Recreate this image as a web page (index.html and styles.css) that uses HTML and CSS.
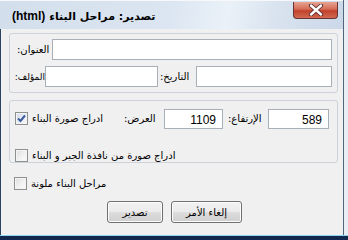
FILE: index.html
```html
<!DOCTYPE html>
<html>
<head>
  <meta charset="utf-8">
  <title>تصدير: مراحل البناء (html)</title>
  <link rel="stylesheet" href="styles.css">
</head>
<body>
<div class="window">
  <div class="window__title">
    <span class="window__caption">
      <span class="window__tag">(html)</span>
      <span class="window__name" dir="rtl">تصدير: مراحل البناء</span>
    </span>
    <span class="window__close">
      <svg width="18" height="12" viewBox="0 0 18 12">
        <path d="M4 1.5 L14 10.5 M14 1.5 L4 10.5" stroke="#5a2a2a" stroke-width="4.2" stroke-linecap="round"/>
        <path d="M4 1.5 L14 10.5 M14 1.5 L4 10.5" stroke="#ffffff" stroke-width="2.4" stroke-linecap="round"/>
      </svg>
    </span>
  </div>

  <div class="window__body">
    <div class="group group_info">
      <div class="row">
        <span class="lbl lbl_title" dir="rtl">العنوان:</span>
        <span class="field field_title"></span>
      </div>
      <div class="row row_second">
        <span class="lbl lbl_author" dir="rtl">المؤلف:</span>
        <span class="field field_author"></span>
        <span class="lbl lbl_date" dir="rtl">التاريخ:</span>
        <span class="field field_date"></span>
      </div>
    </div>

    <div class="group group_image">
      <div class="row">
        <span class="check check_on">
          <svg width="11" height="11" viewBox="0 0 11 11">
            <path d="M2 5.5 L4.5 8 L9 2.5" fill="none" stroke="#3c5c9c" stroke-width="2"/>
          </svg>
        </span>
        <span class="cap cap_image" dir="rtl">ادراج صورة البناء</span>
        <span class="lbl lbl_width" dir="rtl">العرض:</span>
        <span class="field field_num field_width">1109</span>
        <span class="lbl lbl_height" dir="rtl">الإرتفاع:</span>
        <span class="field field_num field_height">589</span>
      </div>
      <div class="row row_check">
        <span class="check"></span>
        <span class="cap" dir="rtl">ادراج صورة من نافذة الجبر و البناء</span>
      </div>
    </div>

    <div class="row row_colored">
      <span class="check"></span>
      <span class="cap" dir="rtl">مراحل البناء ملونة</span>
    </div>

    <div class="buttons">
      <span class="btn btn_export" dir="rtl">تصدير</span>
      <span class="btn btn_cancel" dir="rtl">إلغاء الأمر</span>
    </div>
  </div>
</div>
<div class="taskbar"></div>
</body>
</html>
```

FILE: styles.css
```css
body {
    margin: 0;
    background: #e9eef4;
    font-family: "DejaVu Sans", "Noto Sans", sans-serif;
    font-size: 10px;
    color: #000;
  }
.window {
    width: 344px;
    height: 235px;
    background: #f0f0f0;
    border-right: 1px solid #53657c;
    box-sizing: border-box;
  }
.window__title {
    height: 29px;
    display: flex;
    align-items: flex-start;
    background: linear-gradient(100deg, #d3deec 0%, #dce6f2 50%, #eaf1f8 66%, #d9e3ef 80%, #cbd8e9 100%);
    border-top: 1px solid #f6f8fb;
    box-sizing: border-box;
  }
.window__caption {
    display: flex;
    align-items: baseline;
    font-weight: bold;
    font-size: 11px;
    padding: 8px 0 0 12px;
    flex-grow: 1;
  }
.window__tag {
    font-family: "Liberation Sans", Arial, sans-serif;
    font-size: 12px;
  }
.window__name {
    margin-left: 4px;
  }
.window__close {
    width: 45px;
    height: 17px;
    margin: 1px 5px 0 0;
    display: flex;
    align-items: center;
    justify-content: center;
    border: 1px solid #6b3434;
    border-top: 0;
    border-radius: 0 0 4px 4px;
    background: linear-gradient(#e8a493 0%, #d46b56 45%, #c2412c 55%, #d06a52 100%);
    box-sizing: border-box;
  }
.window__body {
    height: 206px;
    border-left: 1px solid #2c4262;
    padding: 4px 0 0 8px;
    box-sizing: border-box;
  }
.group {
    width: 329px;
    border: 1px solid #cdd3d8;
    border-radius: 3px;
    box-sizing: border-box;
  }
.group_info {
    padding: 5px 5px 5px 7px;
    height: 60px;
  }
.group_image {
    margin-top: 7px;
    padding: 7px 4px 1px 5px;
    height: 63px;
  }
.row {
    display: flex;
    align-items: center;
    height: 21px;
  }
.row_second {
    margin-top: 6px;
  }
.lbl {
    display: block;
    text-align: left;
    white-space: nowrap;
  }
.lbl_title { width: 35px; }
.lbl_author { width: 28px; font-size: 9px; }
.lbl_date { width: 38px; padding-left: 2px; box-sizing: border-box; }
.lbl_width { width: 40px; }
.lbl_height { width: 45px; padding-left: 5px; box-sizing: border-box; }

.field {
    display: block;
    height: 21px;
    background: #fff;
    border: 1px solid #a9afb6;
    box-sizing: border-box;
  }
.field_title { width: 280px; }
.field_author { width: 113px; }
.field_date { width: 136px; }
.field_num {
    height: 20px;
    text-align: right;
    padding: 3px 6px 0 0;
    font-family: "Liberation Sans", Arial, sans-serif;
    font-size: 12px;
  }
.field_width { width: 59px; }
.field_height { width: 61px; }

.check {
    display: flex;
    align-items: center;
    justify-content: center;
    width: 13px;
    height: 13px;
    flex-shrink: 0;
    border: 1px solid #8e8f8f;
    background: linear-gradient(135deg, #dcdcdc 0%, #f3f3f3 60%, #fbfbfb 100%);
    box-shadow: inset 0 0 0 1px #f4f4f4;
    box-sizing: border-box;
  }
.check_on {
    background: linear-gradient(135deg, #d2dbe8 0%, #eef2f7 70%, #fafbfd 100%);
  }
.cap {
    display: block;
    text-align: left;
    white-space: nowrap;
    padding-left: 4px;
  }
.cap_image { width: 96px; box-sizing: border-box; }
.row_check {
    margin-top: 19px;
    height: 14px;
  }
.row_colored {
    margin: 13px 0 0 5px;
    height: 14px;
  }
.buttons {
    display: flex;
    gap: 8px;
    margin: 11px 0 0 98px;
  }
.btn {
    display: flex;
    align-items: center;
    justify-content: center;
    height: 22px;
    border: 1px solid #707070;
    border-radius: 3px;
    background: linear-gradient(#f2f2f2 0%, #ebebeb 49%, #dddddd 51%, #cfcfcf 100%);
    box-shadow: inset 0 0 0 1px #fcfcfc;
    box-sizing: border-box;
  }
.btn_export { width: 56px; }
.btn_cancel { width: 71px; }
.taskbar {
    height: 5px;
    border-top: 1px solid #8fd4f0;
    background: #12284f;
  }
```
